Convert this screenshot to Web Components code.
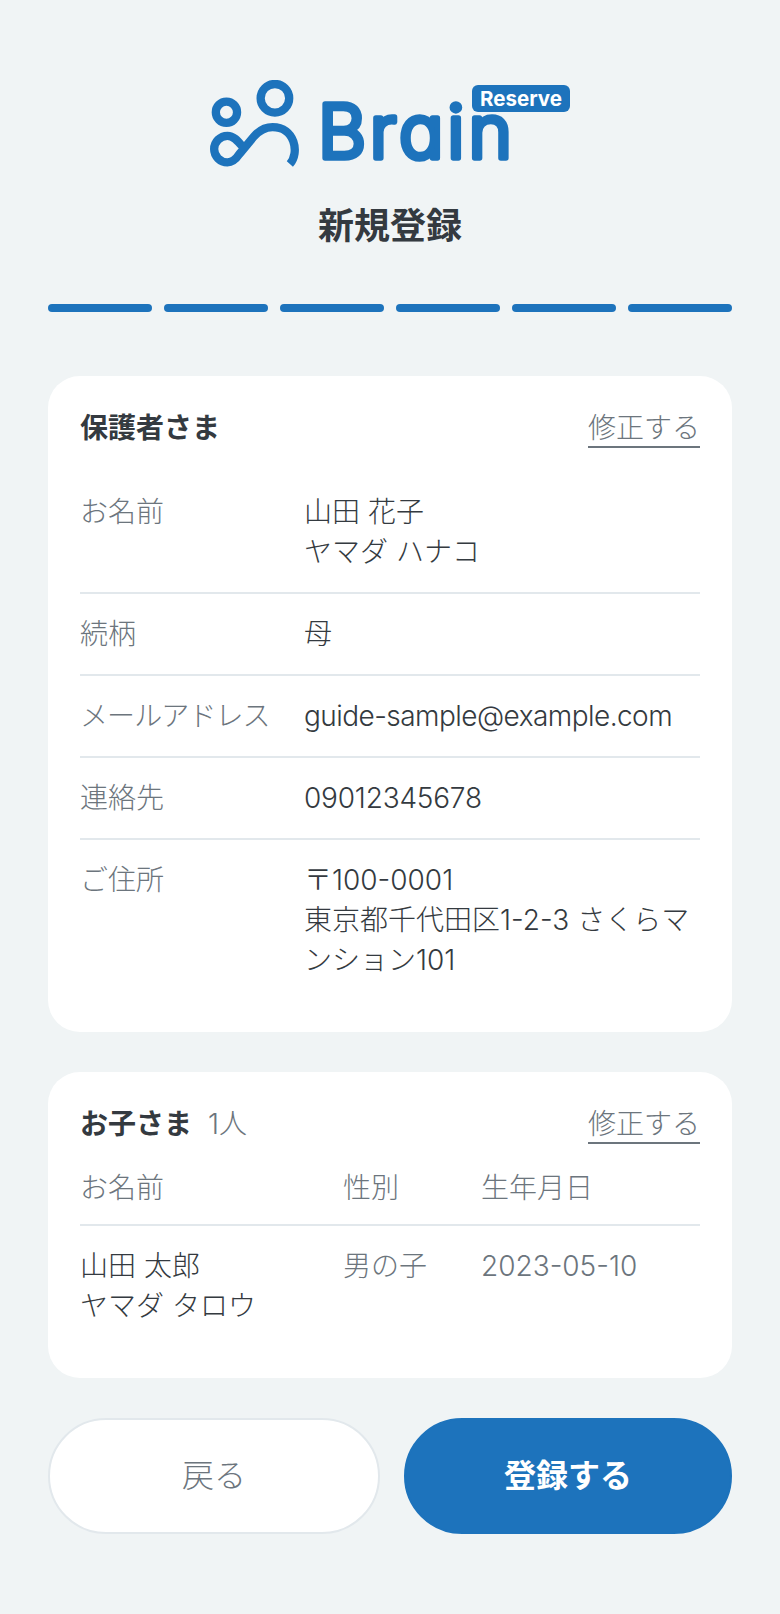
<!DOCTYPE html>
<html lang="ja">
<head>
<meta charset="utf-8">
<title>新規登録</title>
<style>
  html, body { margin: 0; padding: 0; }
  body {
    background: #f0f4f5;
    color: #343a40;
    font-family: Inter, "Noto Sans CJK JP", sans-serif;
    font-size: 28px;
    font-weight: 300;
    line-height: 40px;
  }
  .latin { font-weight: 350; }
</style>
</head>
<body>
<signup-page>
  <brain-logo slot="logo"></brain-logo>
  <span slot="title">新規登録</span>
  <step-bar slot="steps" count="6"></step-bar>

  <info-card>
    <span slot="title">保護者さま</span>
    <info-row label="お名前">山田 花子<br>ヤマダ ハナコ</info-row>
    <info-row label="続柄">母</info-row>
    <info-row label="メールアドレス" tight><span class="latin" style="letter-spacing:-.55px">guide-sample@example.com</span></info-row>
    <info-row label="連絡先"><span class="latin" style="letter-spacing:-.2px">09012345678</span></info-row>
    <info-row label="ご住所" last>〒100-0001<br>東京都千代田区1-2-3 さくらマンション101</info-row>
  </info-card>

  <info-card compact>
    <span slot="title">お子さま</span>
    <span slot="extra">1人</span>
    <child-row head name="お名前" gender="性別" birth="生年月日"></child-row>
    <child-row gender="男の子" birth="2023-05-10">山田 太郎<br>ヤマダ タロウ</child-row>
  </info-card>

  <div slot="actions" class="actions">
    <action-button>戻る</action-button>
    <action-button primary>登録する</action-button>
  </div>
</signup-page>

<template id="signup-page">
  <style>
    :host { display: block; padding: 0 48px 80px; box-sizing: border-box; min-height: 1614px; }
    header { display: flex; flex-direction: column; align-items: center; padding-top: 80px; }
    h1 { margin: 32px 0 0; font-size: 36px; line-height: 52px; font-weight: 700; }
    .steps { margin: 52px 0 64px; }
    .cards { display: flex; flex-direction: column; gap: 40px; }
    .actions { margin-top: 40px; }
    ::slotted(.actions) { display: flex; gap: 24px; }
  </style>
  <header>
    <slot name="logo"></slot>
    <h1><slot name="title"></slot></h1>
  </header>
  <div class="steps"><slot name="steps"></slot></div>
  <div class="cards"><slot></slot></div>
  <div class="actions"><slot name="actions"></slot></div>
</template>

<template id="brain-logo">
  <style>
    :host { display: block; position: relative; width: 360px; height: 88px; }
    .wrap { display: flex; align-items: flex-start; gap: 14px; height: 88px; }
    svg { display: block; flex: none; }
    .mark { width: 90px; height: 88px; }
    .word { width: 220px; height: 104px; }
    .word text {
      fill: #1d73bc;
      stroke: #1d73bc;
      stroke-width: 5.5px;
      stroke-linejoin: round;
      font-family: Inter, sans-serif;
      font-feature-settings: "cv11";
      font-size: 74px;
      font-weight: 300;
      letter-spacing: 3.8px;
    }
    .badge {
      position: absolute;
      left: 262px;
      top: 5px;
      width: 98px;
      height: 27px;
      border-radius: 6px;
      background: #1d73bc;
      color: #fff;
      font-family: Inter, sans-serif;
      font-size: 20.5px;
      font-weight: 700;
      line-height: 27px;
      text-align: center;
    }
  </style>
  <div class="wrap">
    <svg class="mark" viewBox="30 30 270 265" aria-hidden="true">
      <g fill="none" stroke="#1d73bc" stroke-width="25">
        <circle cx="225" cy="85" r="43"/>
        <circle cx="79" cy="127" r="32"/>
        <path d="M270 283C300 250 285 172 218 172C190 172 172 188 160 202L118 253C108 268 98 278 82 278C60 278 42 260 42 238C42 216 60 198 82 198C100 198 112 212 125 228"/>
      </g>
    </svg>
    <svg class="word" viewBox="0 0 220 104"><text x="4" y="78">Brain</text></svg>
  </div>
  <span class="badge">Reserve</span>
</template>

<template id="info-card">
  <style>
    :host { display: block; background: #fff; border-radius: 32px; padding: 32px; }
    .head { display: flex; align-items: flex-start; justify-content: space-between; margin-bottom: 24px; }
    :host([compact]) .head { margin-bottom: 4px; }
    .title { font-weight: 700; }
    .extra { margin-left: 16px; color: #6c757d; }
    a { color: #6c757d; text-decoration: none; border-bottom: 2px solid #6c757d; display: block; height: 38px; }
  </style>
  <div class="head">
    <div><span class="title"><slot name="title"></slot></span><span class="extra"><slot name="extra"></slot></span></div>
    <a href="#">修正する</a>
  </div>
  <slot></slot>
</template>

<template id="info-row">
  <style>
    :host { display: grid; grid-template-columns: 224px 1fr; padding: 20px 0; border-bottom: 2px solid #e2e8ec; }
    :host([last]) { border-bottom: 0; }
    :host([tight]) .label { letter-spacing: -.9px; }
    .label { color: #6c757d; }
  </style>
  <div class="label"></div>
  <div><slot></slot></div>
</template>

<template id="child-row">
  <style>
    :host { display: grid; grid-template-columns: 263px 138px 1fr; padding: 20px 0; color: #6c757d; }
    :host([head]) { padding: 20px 0 16px; border-bottom: 2px solid #e2e8ec; }
    .name { color: #343a40; }
    :host([head]) .name { color: #6c757d; }
    .birth { font-weight: 350; }
    :host([head]) .birth { font-weight: 300; }
  </style>
  <div class="name"><span class="n"></span><slot></slot></div>
  <div class="gender"></div>
  <div class="birth"></div>
</template>

<template id="action-button">
  <style>
    :host { display: block; flex: 1 1 0; }
    :host([primary]) { flex: 0 0 328px; }
    button {
      display: block;
      width: 100%;
      height: 116px;
      box-sizing: border-box;
      border: 2px solid #e2e8ec;
      border-radius: 58px;
      background: #fff;
      color: #6c757d;
      font: inherit;
      font-size: 32px;
      padding: 0;
    }
    :host([primary]) button { border-color: #1d73bc; background: #1d73bc; color: #fff; font-weight: 700; }
  </style>
  <button type="button"><slot></slot></button>
</template>

<template id="step-bar">
  <style>
    :host { display: flex; gap: 12px; }
    i { display: block; flex: 1; height: 8px; border-radius: 4px; background: #1d73bc; }
  </style>
</template>

<script>
  function shadow(el, id) {
    const root = el.attachShadow({ mode: 'open' });
    root.appendChild(document.getElementById(id).content.cloneNode(true));
    return root;
  }

  class SignupPage extends HTMLElement {
    constructor() { super(); shadow(this, 'signup-page'); }
  }

  class BrainLogo extends HTMLElement {
    constructor() { super(); shadow(this, 'brain-logo'); }
  }

  class InfoCard extends HTMLElement {
    constructor() { super(); shadow(this, 'info-card'); }
  }

  class InfoRow extends HTMLElement {
    constructor() { super(); shadow(this, 'info-row'); }
    connectedCallback() {
      this.shadowRoot.querySelector('.label').textContent = this.getAttribute('label');
    }
  }

  class ChildRow extends HTMLElement {
    constructor() { super(); shadow(this, 'child-row'); }
    connectedCallback() {
      const root = this.shadowRoot;
      root.querySelector('.n').textContent = this.getAttribute('name') || '';
      root.querySelector('.gender').textContent = this.getAttribute('gender');
      root.querySelector('.birth').textContent = this.getAttribute('birth');
    }
  }

  class ActionButton extends HTMLElement {
    constructor() { super(); shadow(this, 'action-button'); }
  }

  class StepBar extends HTMLElement {
    constructor() { super(); shadow(this, 'step-bar'); }
    connectedCallback() {
      const n = Number(this.getAttribute('count'));
      for (let i = 0; i < n; i++) {
        this.shadowRoot.appendChild(document.createElement('i'));
      }
    }
  }

  customElements.define('signup-page', SignupPage);
  customElements.define('brain-logo', BrainLogo);
  customElements.define('info-card', InfoCard);
  customElements.define('info-row', InfoRow);
  customElements.define('child-row', ChildRow);
  customElements.define('action-button', ActionButton);
  customElements.define('step-bar', StepBar);
</script>
</body>
</html>
